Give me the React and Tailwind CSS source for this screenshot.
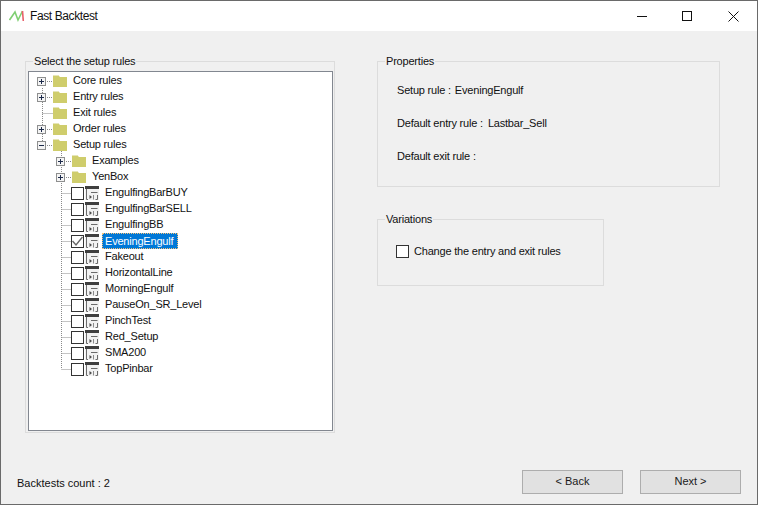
const rootRows = [
  { label: "Core rules", kind: "plus" },
  { label: "Entry rules", kind: "plus" },
  { label: "Exit rules", kind: "none" },
  { label: "Order rules", kind: "plus" },
  { label: "Setup rules", kind: "minus" },
];
const subFolders = ["Examples", "YenBox"];
const rules = [
  "EngulfingBarBUY",
  "EngulfingBarSELL",
  "EngulfingBB",
  "EveningEngulf",
  "Fakeout",
  "HorizontalLine",
  "MorningEngulf",
  "PauseOn_SR_Level",
  "PinchTest",
  "Red_Setup",
  "SMA200",
  "TopPinbar",
];

function Expander({ open }) {
  return (
    <svg width="9" height="9" viewBox="0 0 9 9" className="shrink-0">
      <rect x="0.5" y="0.5" width="8" height="8" fill="#f4f4f4" stroke="#8e8f8f" />
      <path d={open ? "M2 4.5H7" : "M2 4.5H7M4.5 2V7"} stroke="#1c2a4a" fill="none" />
    </svg>
  );
}

function Folder() {
  return (
    <svg width="14" height="12" viewBox="0 0 14 12" className="shrink-0">
      <path d="M0 1H6L7 2H14V12H0Z" fill="#cfcd6c" />
      <path d="M0 0.5H6" stroke="#e6e5b8" />
    </svg>
  );
}

function RuleIcon() {
  return (
    <svg width="14" height="14" viewBox="0 0 14 14" className="shrink-0">
      <rect x="0" y="0" width="14" height="14" fill="#f2f2f2" />
      <path d="M0 1.5H14" stroke="#3f3f3f" strokeWidth="3" />
      <path d="M1.5 3V13.5M1.5 13.5H3M6 6.5H12.5M10.5 13.5H12.5V9" stroke="#6a6a6a" fill="none" />
      <path d="M4.5 9V13L7 11Z" fill="#4a4a4a" />
      <path d="M8.5 9V13.5" stroke="#8a8a8a" />
    </svg>
  );
}

function Check({ checked }) {
  return (
    <span className="w-[13px] h-[13px] shrink-0 border border-[#333333] bg-white flex items-center justify-center">
      {checked && (
        <svg width="11" height="11" viewBox="0 0 11 11">
          <path d="M0.5 5L4 9L10.5 1" stroke="#666" strokeWidth="1.4" fill="none" />
        </svg>
      )}
    </span>
  );
}

function TreeLines() {
  const d = [];
  d.push("M13.5 16V73");
  [9, 25, 41, 57, 73].forEach((y) => d.push(`M${y === 41 ? 13.5 : 18} ${y + 0.5}H24`));
  d.push("M32.5 79V297");
  [89, 105].forEach((y) => d.push(`M37 ${y + 0.5}H43`));
  for (let i = 0; i < 12; i++) d.push(`M32.5 ${121 + i * 16 + 0.5}H42`);
  return (
    <svg width="60" height="320" className="absolute left-0 top-0 pointer-events-none">
      <path d={d.join("")} stroke="#8a8a8a" strokeDasharray="1 1" fill="none" />
    </svg>
  );
}

function Tree() {
  return (
    <div className="relative flex-1 bg-white border border-[#828790] pt-px">
      <TreeLines />
      <ul className="relative flex flex-col">
        {rootRows.map((r) => (
          <li key={r.label} className="h-4 flex items-center pl-[8px]">
            <span className="w-[9px] h-[9px] shrink-0">{r.kind !== "none" && <Expander open={r.kind === "minus"} />}</span>
            <span className="ml-[7px]"><Folder /></span>
            <span className="ml-[6px] -mt-[2px]">{r.label}</span>
          </li>
        ))}
        {subFolders.map((r) => (
          <li key={r} className="h-4 flex items-center pl-[27px]">
            <Expander />
            <span className="ml-[7px]"><Folder /></span>
            <span className="ml-[6px] -mt-[2px]">{r}</span>
          </li>
        ))}
        {rules.map((r) => {
          const active = r === "EveningEngulf";
          return (
            <li key={r} className="h-4 flex items-center pl-[42px]">
              <Check checked={active} />
              <span className="ml-px"><RuleIcon /></span>
              {active ? (
                <span className="ml-[3px] px-[2px] w-[76px] h-4 leading-[14px] bg-[#0078d7] text-white border border-dotted border-[#f5c27a]">{r}</span>
              ) : (
                <span className="ml-[6px] -mt-[2px]">{r}</span>
              )}
            </li>
          );
        })}
      </ul>
    </div>
  );
}

function GroupBox({ title, className, children }) {
  return (
    <section className={`relative border border-[#dcdcdc] ${className}`}>
      <span className="absolute left-[7px] -top-[8px] h-[15px] leading-[15px] px-px bg-[#f0f0f0]">{title}</span>
      {children}
    </section>
  );
}

function Btn({ children }) {
  return (
    <button className="w-[101px] h-[24px] pb-[2px] bg-[#e1e1e1] border border-[#adadad] text-[#1a1a1a] tracking-normal">{children}</button>
  );
}

export default function App() {
  return (
    <div className="w-[758px] h-[505px] border border-[#6a6a6a] bg-[#f0f0f0] flex flex-col text-[11px] tracking-[-0.2px] leading-4 text-[#111] font-['Liberation_Sans',sans-serif] overflow-hidden">
      <header className="h-[30px] shrink-0 bg-white flex items-center">
        <svg width="16" height="12" viewBox="0 0 16 12" className="ml-[8px]">
          <path d="M0.5 10L6 2L9 10L13.5 1" stroke="#7fcf72" strokeWidth="1.6" fill="none" />
          <path d="M13.5 1L14.3 11" stroke="#e8606a" strokeWidth="1.6" fill="none" />
        </svg>
        <span className="ml-[5px] text-[12px] tracking-[-0.4px] text-[#111]">Fast Backtest</span>
        <div className="ml-auto flex items-center">
          <svg width="10" height="10" viewBox="0 0 10 10" className="mr-[35px]"><path d="M0 5.5H10" stroke="#111" /></svg>
          <svg width="10" height="10" viewBox="0 0 10 10" className="mr-[36px]"><rect x="0.5" y="0.5" width="9" height="9" fill="none" stroke="#111" /></svg>
          <svg width="11" height="11" viewBox="0 0 11 11" className="mr-[18px]"><path d="M0.5 0.5L10.5 10.5M10.5 0.5L0.5 10.5" stroke="#111" /></svg>
        </div>
      </header>
      <main className="flex-1 flex flex-col">
        <div className="flex-1 flex pt-[30px] pl-[24px]">
          <GroupBox title="Select the setup rules" className="w-[310px] h-[372px] pt-[9px] pl-[2px] pr-[1px] pb-px flex flex-col">
            <Tree />
          </GroupBox>
          <div className="ml-[42px] flex flex-col">
            <GroupBox title="Properties" className="w-[343px] h-[126px] pl-[19px] pt-[20px] flex flex-col gap-[17px]">
              <p className="flex gap-[4px]"><span>Setup rule :</span><span>EveningEngulf</span></p>
              <p className="flex gap-[5px]"><span>Default entry rule :</span><span>Lastbar_Sell</span></p>
              <p>Default exit rule :</p>
            </GroupBox>
            <GroupBox title="Variations" className="mt-[32px] w-[227px] h-[67px] pl-[18px] pt-[23px]">
              <label className="flex items-center gap-[5px]">
                <Check />
                <span>Change the entry and exit rules</span>
              </label>
            </GroupBox>
          </div>
        </div>
        <footer className="h-[24px] mb-[10px] flex items-start pl-[16px] pr-[16px]">
          <span className="mt-[5px] tracking-normal">Backtests count : 2</span>
          <div className="ml-auto flex gap-[17px]">
            <Btn>&lt; Back</Btn>
            <Btn>Next &gt;</Btn>
          </div>
        </footer>
      </main>
    </div>
  );
}
